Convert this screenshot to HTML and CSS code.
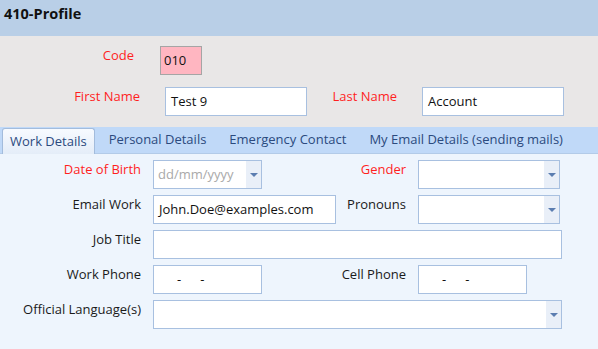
FILE: index.html
```html
<!DOCTYPE html>
<html>
<head>
<meta charset="utf-8">
<link rel="stylesheet" href="styles.css">
</head>
<body>
<div class="header">410-Profile</div>
<div class="top">
  <div class="row">
    <div class="lbl req w-code">Code</div>
    <div class="codebox">010</div>
  </div>
  <div class="row">
    <div class="lbl req w-first">First Name</div>
    <div class="field w-name">Test 9</div>
    <div class="lbl req w-last">Last Name</div>
    <div class="field w-name">Account</div>
  </div>
</div>
<div class="tabs">
  <div class="tab active">Work Details</div>
  <div class="tab">Personal Details</div>
  <div class="tab">Emergency Contact</div>
  <div class="tab">My Email Details (sending mails)</div>
</div>
<div class="content">
  <div class="row">
    <div class="lbl req w-main">Date of Birth</div>
    <div class="field select w-short"><span class="ph">dd/mm/yyyy</span><span class="btn"><span class="arrow"></span></span></div>
    <div class="lbl req w-gender">Gender</div>
    <div class="field select w-sel"><span></span><span class="btn"><span class="arrow"></span></span></div>
  </div>
  <div class="row">
    <div class="lbl w-main">Email Work</div>
    <div class="field w-email">John.Doe@examples.com</div>
    <div class="lbl w-pron">Pronouns</div>
    <div class="field select w-sel"><span></span><span class="btn"><span class="arrow"></span></span></div>
  </div>
  <div class="row">
    <div class="lbl w-main">Job Title</div>
    <div class="field w-long"></div>
  </div>
  <div class="row">
    <div class="lbl w-main">Work Phone</div>
    <div class="field phone w-short"><span>-</span><span>-</span></div>
    <div class="lbl w-gender">Cell Phone</div>
    <div class="field phone w-short"><span>-</span><span>-</span></div>
  </div>
  <div class="row">
    <div class="lbl w-main">Official Language(s)</div>
    <div class="field select w-long"><span></span><span class="btn"><span class="arrow"></span></span></div>
  </div>
</div>
</body>
</html>
```
FILE: styles.css
```css
* { box-sizing: border-box; }
html, body { margin: 0; padding: 0; }
body {
  width: 598px;
  height: 349px;
  overflow: hidden;
  font-family: "Open Sans", "Noto Sans", sans-serif;
  font-size: 13px;
  color: #1a1a1a;
  background: #eef5fd;
}
.header {
  height: 36px;
  background: #b9cfe7;
  font-weight: bold;
  font-size: 14.5px;
  line-height: 28px;
  padding-left: 4px;
  color: #111;
}
.top {
  background: #e9e7e7;
  height: 91px;
  padding-top: 10px;
  display: flex;
  flex-direction: column;
  gap: 12px;
}
.row {
  display: flex;
  align-items: flex-start;
  height: 29px;
}
.lbl {
  text-align: right;
  line-height: 18px;
  white-space: nowrap;
  color: #1a1a1a;
}
.lbl.req { color: #ff1f1f; }
.w-code { width: 134px; margin-right: 26px; }
.w-first { width: 140px; margin-right: 25px; }
.w-last { width: 90px; margin-right: 25px; }
.w-main { width: 141px; margin-right: 12px; }
.w-gender { width: 144px; margin-right: 12px; }
.w-pron { width: 70px; margin-right: 12px; }

.codebox {
  width: 42px;
  height: 29px;
  background: #ffb6c1;
  border: 1px solid #a5a5a5;
  line-height: 27px;
  padding-left: 3px;
  color: #111;
}
.field {
  height: 29px;
  background: #fff;
  border: 1px solid #a8c0e0;
  line-height: 27px;
  padding-left: 5px;
  color: #111;
  white-space: nowrap;
}
.w-name { width: 142px; }
.w-short { width: 109px; }
.w-sel { width: 142px; }
.w-email { width: 183px; }
.w-long { width: 409px; }

.select {
  display: flex;
  justify-content: space-between;
  padding-left: 4px;
}
.select .btn {
  width: 15px;
  height: 27px;
  background: #e9eff8;
  display: flex;
  align-items: center;
  justify-content: center;
}
.arrow {
  width: 0;
  height: 0;
  border-left: 4px solid transparent;
  border-right: 4px solid transparent;
  border-top: 4px solid #5b7db0;
  margin-top: 1px;
}
.ph { color: #a9a9a9; }

.phone {
  display: flex;
  gap: 19px;
  padding-left: 23px;
}

.tabs {
  height: 27px;
  background: #c0d9f8;
  border-bottom: 1px solid #b3cbe8;
  display: flex;
  align-items: flex-end;
  padding-left: 2px;
}
.tab {
  height: 26px;
  line-height: 24px;
  padding: 0 7px;
  margin-right: 9px;
  color: #2b4a7e;
  white-space: nowrap;
}
.tab.active {
  background: linear-gradient(#f7faff, #e4edf8);
  border: 1px solid #a3bcdc;
  border-bottom: none;
  border-radius: 3px 3px 0 0;
  margin-bottom: -1px;
  margin-right: 7px;
}
.content {
  padding-top: 6px;
  display: flex;
  flex-direction: column;
  gap: 6px;
}
```
